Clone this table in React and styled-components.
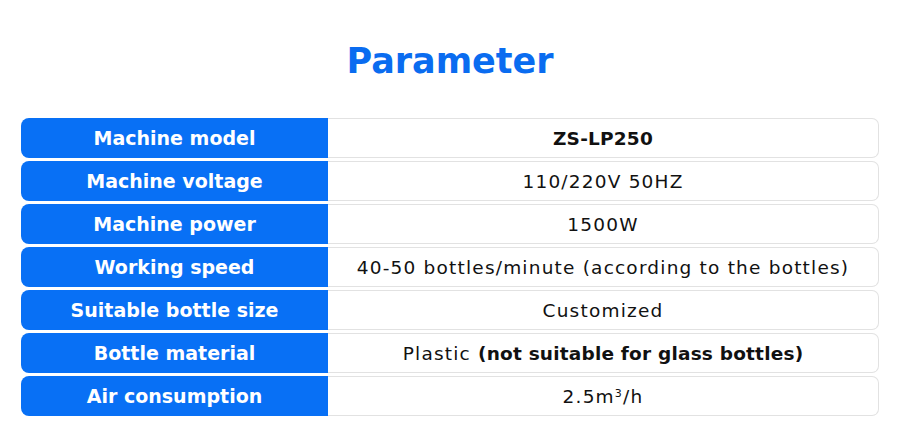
import React from 'react';
import styled, { createGlobalStyle } from 'styled-components';

const Global = createGlobalStyle`
  body {
    margin: 0;
    background: #ffffff;
    font-family: "DejaVu Sans", "Liberation Sans", sans-serif;
  }
`;

const rows = [
  { label: 'Machine model', value: <b>ZS-LP250</b> },
  { label: 'Machine voltage', value: '110/220V 50HZ' },
  { label: 'Machine power', value: '1500W' },
  { label: 'Working speed', value: '40-50 bottles/minute (according to the bottles)' },
  { label: 'Suitable bottle size', value: 'Customized' },
  { label: 'Bottle material', value: <>Plastic <b>(not suitable for glass bottles)</b></> },
  { label: 'Air consumption', value: <>2.5m<sup>3</sup>/h</> },
];

const Page = styled.div`
  width: 900px;
  height: 439px;
  box-sizing: border-box;
  padding: 34px 21px 0 21px;
`;

const Title = styled.h1`
  margin: 0 0 30px;
  text-align: center;
  font-family: "DejaVu Sans", sans-serif;
  font-weight: 700;
  font-size: 35px;
  line-height: 54px;
  color: #0a6cf0;
`;

const Table = styled.div`
  display: flex;
  flex-direction: column;
  gap: 3px;
`;

const Row = styled.div`
  display: flex;
  height: 40px;
`;

const Label = styled.div`
  width: 307px;
  flex-shrink: 0;
  display: flex;
  align-items: center;
  justify-content: center;
  background: #0870f5;
  color: #fff;
  border-radius: 8px 0 0 8px;
  font-weight: 700;
  font-size: 19px;
`;

const Value = styled.div`
  flex: 1;
  display: flex;
  align-items: center;
  justify-content: center;
  border: 1px solid #e2e2e2;
  border-left: none;
  border-radius: 0 7px 7px 0;
  color: #111;
`;

const Text = styled.span`
  font-size: 18.5px;
  letter-spacing: 1.2px;
  white-space: pre;

  b {
    font-weight: 700;
    letter-spacing: 0.2px;
  }

  sup {
    font-size: 11px;
    line-height: 0;
    vertical-align: 6px;
  }
`;

export default function App() {
  return (
    <Page>
      <Global />
      <Title>Parameter</Title>
      <Table>
        {rows.map((r) => (
          <Row key={r.label}>
            <Label>{r.label}</Label>
            <Value>
              <Text>{r.value}</Text>
            </Value>
          </Row>
        ))}
      </Table>
    </Page>
  );
}
